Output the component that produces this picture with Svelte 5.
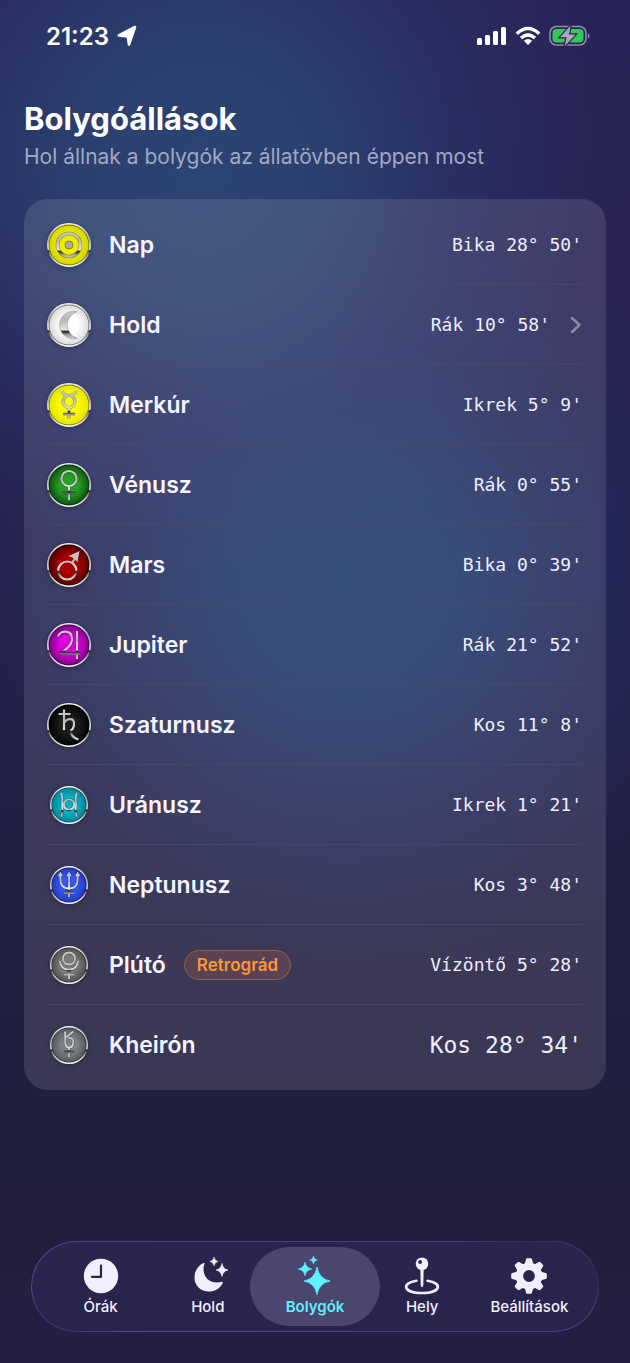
<script>
  const planets = [
    { id: 'sun', name: 'Nap', sign: "Bika 28° 50'", inner: '#f0ec00', outer: '#d2d200' },
    { id: 'moon', name: 'Hold', sign: "Rák 10° 58'", inner: '#ffffff', outer: '#d6d6d6', link: true },
    { id: 'mercury', name: 'Merkúr', sign: "Ikrek 5° 9'", inner: '#fcfc00', outer: '#e2e200' },
    { id: 'venus', name: 'Vénusz', sign: "Rák 0° 55'", inner: '#25a023', outer: '#0c4d10' },
    { id: 'mars', name: 'Mars', sign: "Bika 0° 39'", inner: '#a80000', outer: '#4c0000' },
    { id: 'jupiter', name: 'Jupiter', sign: "Rák 21° 52'", inner: '#dc00dc', outer: '#780080' },
    { id: 'saturn', name: 'Szaturnusz', sign: "Kos 11° 8'", inner: '#1c1c1c', outer: '#000000' },
    { id: 'uranus', name: 'Uránusz', sign: "Ikrek 1° 21'", inner: '#08b0c2', outer: '#067f92', small: true },
    { id: 'neptune', name: 'Neptunusz', sign: "Kos 3° 48'", inner: '#3558f4', outer: '#2038b4', small: true },
    { id: 'pluto', name: 'Plútó', sign: "Vízöntő 5° 28'", inner: '#7c7c7c', outer: '#4c4c4c', small: true, retro: true },
    { id: 'chiron', name: 'Kheirón', sign: "Kos 28° 34'", inner: '#7c8284', outer: '#505456', small: true, large: true }
  ];

  const glyphs = {
    mercury: 'M15 8 Q16 12.500 22 12.500 Q28 12.500 29 8 M28 18.500 A6 6 0 1 1 16 18.500 A6 6 0 1 1 28 18.500 M22 24.500 V36 M16 31 H28',
    venus: 'M29.500 15.500 A7.500 7.500 0 1 1 14.500 15.500 A7.500 7.500 0 1 1 29.500 15.500 M22 23 V37 M15 30 H29',
    jupiter: 'M11 13.500 C13 7 25 6 25 16 C25 22 18 28 13 30.500 H33 M30 8 V36',
    saturn: 'M17 6.500 V27 M11.500 11 H23.500 M17 20 C20 14.500 27 15 27 20 C27 23 26.500 26 24 27.500 C23.500 32 27 35 31.500 36.500',
    uranus: 'M13 8 Q15 14 14 21.500 Q15 30 13 35.500 M31 8 Q29 14 30 21.500 Q29 30 31 35.500 M28 21.500 A6 6 0 1 1 16 21.500 A6 6 0 1 1 28 21.500 M14 21.500 H16 M28 21.500 H30',
    neptune: 'M12 8 V15 Q12 26 22 26 Q32 26 32 15 V8 M22 8 V36 M16 31 H28 M10 11.500 L12 8.500 L14 11.500 M20 11.500 L22 8.500 L24 11.500 M30 11.500 L32 8.500 L34 11.500',
    pluto: 'M29 14.500 A7 7 0 1 1 15 14.500 A7 7 0 1 1 29 14.500 M11 17 Q13 27.500 22 27.500 Q31 27.500 33 17 M22 27.500 V38 M16 33 H28',
    chiron: 'M17.500 6.500 V17 M27 6.500 L17.500 14 M17.500 17 Q17.500 25 22 25 Q27 25 27 17 Q26 13.500 21 14 M22 25 V36 M16 30 H28'
  };

  const tabs = [
    { id: 'clock', label: 'Órák' },
    { id: 'night', label: 'Hold' },
    { id: 'stars', label: 'Bolygók' },
    { id: 'place', label: 'Hely' },
    { id: 'gear', label: 'Beállítások' }
  ];
  let active = $state('stars');
  const teeth = [0, 45, 90, 135, 180, 225, 270, 315];
</script>

<div class="screen">
  <div class="status">
    <div class="time">
      <span>21:23</span>
      <svg width="20" height="22" viewBox="0 0 20 22" aria-hidden="true">
        <path d="M18 2 L12 19.500 L10.800 11.500 L1.800 10.500 Z" fill="#fff" stroke="#fff" stroke-width="2.600" stroke-linejoin="round" />
      </svg>
    </div>
    <div class="signals">
      <svg width="30" height="20" viewBox="0 0 30 20" aria-hidden="true">
        <g fill="#fff">
          <rect x="0" y="12" width="5" height="7" rx="1.500" />
          <rect x="8" y="9" width="5" height="10" rx="1.500" />
          <rect x="16" y="5" width="5" height="14" rx="1.500" />
          <rect x="24" y="1" width="5" height="18" rx="1.500" />
        </g>
      </svg>
      <svg width="26" height="20" viewBox="0 0 26 20" aria-hidden="true">
        <g fill="none" stroke="#fff" stroke-width="3.400">
          <path d="M1.800 7.700 Q13 -2.700 24.200 7.700" />
          <path d="M6 12 Q13 5.700 20 12" />
        </g>
        <path d="M8.800 14.700 Q13 11.400 17.200 14.700 L13 19 Z" fill="#fff" />
      </svg>
      <svg width="42" height="22" viewBox="0 0 42 22" aria-hidden="true">
        <rect x="1" y="1.500" width="36" height="18.500" rx="6.500" fill="none" stroke="#8d89a8" stroke-width="1.600" />
        <rect x="3.500" y="4" width="31" height="13.500" rx="4" fill="#35c95a" />
        <path d="M39 8 Q42 11 39 14 Z" fill="#8d89a8" />
        <path d="M21.500 .8 L11 12.200 H17.500 L15.800 21.200 L26.500 9.500 H20 Z" fill="#aaa6bd" stroke="#292552" stroke-width="2.400" paint-order="stroke" />
      </svg>
    </div>
  </div>

  <header>
    <h1>Bolygóállások</h1>
    <p>Hol állnak a bolygók az állatövben éppen most</p>
  </header>

  <ul class="card">
    {#each planets as p (p.id)}
      <li class="row">
        <span class="medal" class:small={p.small}>
          <svg viewBox="0 0 44 44" aria-hidden="true">
            <defs>
              <radialGradient id="fill-{p.id}">
                <stop offset="0" stop-color={p.inner} />
                <stop offset=".45" stop-color={p.inner} />
                <stop offset="1" stop-color={p.outer} />
              </radialGradient>
              <linearGradient id="rim-{p.id}" gradientUnits="userSpaceOnUse" x1="0" y1="0" x2="0" y2="44">
                <stop offset="0" stop-color="#f4f4f4" />
                <stop offset=".35" stop-color="#a8a8a8" />
                <stop offset=".6" stop-color="#ededed" />
                <stop offset=".63" stop-color="#202020" />
                <stop offset=".7" stop-color="#888" />
                <stop offset=".82" stop-color="#ccc" />
                <stop offset="1" stop-color="#fff" />
              </linearGradient>
              <linearGradient id="metal-{p.id}" gradientUnits="userSpaceOnUse" x1="0" y1="6" x2="0" y2="38">
                <stop offset="0" stop-color="#cfcfcf" />
                <stop offset=".35" stop-color="#b8b8b8" />
                <stop offset=".66" stop-color="#e6e6e6" />
                <stop offset=".69" stop-color="#262626" />
                <stop offset=".75" stop-color="#505050" />
                <stop offset=".81" stop-color="#aaa" />
                <stop offset="1" stop-color="#ddd" />
              </linearGradient>
            </defs>
            <circle cx="22" cy="22" r="21" fill="url(#fill-{p.id})" />
            <circle cx="22" cy="22" r="20" fill="none" stroke="#000" stroke-opacity=".45" stroke-width="1" />
            <circle cx="22" cy="22" r="21.200" fill="none" stroke="url(#rim-{p.id})" stroke-width="1.600" />
            {#if p.id === 'sun'}
              <circle cx="22" cy="22" r="11.500" fill="none" stroke="#8a8a10" stroke-width="3.600" />
              <circle cx="22" cy="22" r="11.500" fill="none" stroke="url(#metal-{p.id})" stroke-width="2.600" />
              <circle cx="22" cy="22" r="4" fill="#aaa" stroke="#85851c" />
            {:else if p.id === 'moon'}
              <path d="M30 8.700 A13.800 13.800 0 1 0 30 35.300 A14 14 0 0 1 30 8.700 Z" fill="url(#metal-{p.id})" stroke="#8f8f8f" stroke-width=".5" />
            {:else if p.id === 'mars'}
              <g fill="none" stroke="url(#metal-{p.id})" stroke-width="2.200">
                <circle cx="20.300" cy="27.500" r="9" />
                <path d="M25 20 L29 14" />
              </g>
              <path d="M32.500 8 L21.500 13 L25.500 14.500 L30.500 19 Z" fill="#c8c2c2" />
            {:else}
              <path d={glyphs[p.id]} fill="none" stroke="#000" stroke-opacity=".35" stroke-width="3.200" />
              <path d={glyphs[p.id]} fill="none" stroke="url(#metal-{p.id})" stroke-width="2.200" />
            {/if}
          </svg>
        </span>
        <span class="name">{p.name}</span>
        {#if p.retro}<span class="badge">Retrográd</span>{/if}
        <span class="sign" class:large={p.large}>{p.sign}</span>
        {#if p.link}
          <button class="more" aria-label={p.name}>
            <svg width="12" height="18" viewBox="0 0 12 18" aria-hidden="true">
              <path d="M2 2 L9.500 9 L2 16" fill="none" stroke="#8e8ba8" stroke-width="2.400" stroke-linecap="round" stroke-linejoin="round" />
            </svg>
          </button>
        {/if}
      </li>
    {/each}
  </ul>

  <nav>
    {#each tabs as t (t.id)}
      <button class="tab" class:active={active === t.id} onclick={() => (active = t.id)}>
        <svg width="40" height="40" viewBox="0 0 40 40" fill="currentColor" aria-hidden="true">
          {#if t.id === 'clock'}
            <circle cx="20" cy="20" r="17.200" />
            <path d="M20 9.500 V20.800 H11" fill="none" stroke="#29254d" stroke-width="2.200" stroke-linecap="round" stroke-linejoin="round" />
          {:else if t.id === 'night'}
            <path d="M16.500 7.500 C12.500 19 21 29.500 34 25.800 Q35.300 25.800 34.500 27.500 C31.500 33 26.500 35.500 21 35.500 C12.500 35.500 6.500 29.500 6.500 21.500 C6.500 15 10 9.500 15.500 7 Q16.800 6.600 16.500 7.500 Z" />
            <path d="M26 1 Q26.600 4.900 30 5.500 Q26.600 6.100 26 10 Q25.400 6.100 22 5.500 Q25.400 4.900 26 1 Z" stroke="currentColor" stroke-width=".5" />
            <path d="M34 7.500 Q35 13 40 14 Q35 15 34 20.500 Q33 15 28 14 Q33 13 34 7.500 Z" stroke="currentColor" stroke-width=".6" />
          {:else if t.id === 'stars'}
            <path d="M22 11 Q24 23 35 25 Q24 27 22 38.500 Q20 27 9 25 Q20 23 22 11 Z" stroke="currentColor" stroke-width=".8" stroke-linejoin="round" />
            <path d="M10 6 Q11 12 17 13 Q11 14 10 20 Q9 14 3 13 Q9 12 10 6 Z" stroke="currentColor" stroke-width=".5" />
            <path d="M18.500 0 Q19.100 3.500 22.500 4 Q19.100 4.500 18.500 8 Q17.900 4.500 14.500 4 Q17.900 3.500 18.500 0 Z" stroke="currentColor" stroke-width=".4" />
          {:else if t.id === 'place'}
            <path d="M14.500 24.800 C-1 27 1 37 20 37 C39 37 41 27 25.500 24.800" fill="none" stroke="currentColor" stroke-width="2.600" stroke-linecap="round" />
            <path d="M18.300 12 H21.700 L21.300 29 Q20 33.500 18.700 29 Z" />
            <circle cx="20" cy="7.700" r="6.300" />
            <circle cx="18.100" cy="6" r="1.900" fill="#29254d" />
          {:else}
            {#each teeth as a (a)}
              <path transform="rotate({a} 20 20)" d="M15.500 9 L17 3.200 Q17.300 2.200 18.300 2.200 H21.700 Q22.700 2.200 23 3.200 L24.500 9 Z" />
            {/each}
            <circle cx="20" cy="20" r="9.600" fill="none" stroke="currentColor" stroke-width="7.400" />
          {/if}
        </svg>
        <span>{t.label}</span>
      </button>
    {/each}
  </nav>
</div>

<style>
  :global(body) {
    margin: 0;
    background: #211f3d;
  }
  .screen {
    box-sizing: border-box;
    min-height: 100vh;
    display: flex;
    flex-direction: column;
    padding: 16px 24px 31px;
    font-family: Inter, "Liberation Sans", sans-serif;
    color: #fff;
    background:
      radial-gradient(circle at 32% 170px, rgba(43, 70, 116, 0.95) 0, rgba(43, 68, 115, 0.85) 130px, rgba(42, 56, 110, 0.45) 270px, rgba(40, 38, 90, 0) 400px),
      radial-gradient(circle at 55% 580px, rgba(28, 58, 108, 0.95) 0, rgba(29, 56, 107, 0.9) 120px, rgba(31, 46, 98, 0.5) 250px, rgba(36, 34, 80, 0) 380px),
      linear-gradient(#292457 0, #26214f 500px, #211f40 1020px, #211f3c 1250px, #251f45 100%);
  }
  .status {
    display: flex;
    justify-content: space-between;
    align-items: center;
    height: 40px;
    padding: 0 15px 0 22px;
  }
  .time,
  .signals {
    display: flex;
    align-items: center;
    gap: 8px;
  }
  .time {
    font-size: 24px;
    font-weight: 600;
  }
  header {
    padding-top: 43px;
  }
  h1 {
    margin: 0;
    font-size: 31px;
    line-height: 40px;
    font-weight: 700;
  }
  p {
    margin: 4px 0 0;
    font-size: 21px;
    line-height: 28px;
    color: #a0a8c5;
  }
  .card {
    list-style: none;
    margin: 28px 0 32px;
    padding: 6px 24px 5px;
    border-radius: 24px;
    background: rgba(245, 240, 248, 0.12);
  }
  .row {
    display: flex;
    align-items: center;
    height: 79px;
    border-bottom: 1px solid rgba(80, 80, 94, 0.6);
  }
  .row:last-child {
    border-bottom-color: transparent;
  }
  .medal {
    display: grid;
    place-items: center;
    width: 44px;
    height: 44px;
    margin: 0 18px 0 -1px;
  }
  .medal svg {
    width: 44px;
    height: 44px;
    overflow: visible;
    border-radius: 50%;
    box-shadow: 0 1px 5px rgba(0, 0, 0, 0.3);
  }
  .medal.small svg {
    width: 38px;
    height: 38px;
  }
  .name {
    font-size: 23px;
    font-weight: 600;
    color: #f5f4ff;
  }
  .badge {
    margin-left: 18px;
    padding: 0 12px;
    border: 1px solid #95603f;
    border-radius: 15px;
    background: #584253;
    color: #fb9736;
    font-size: 17px;
    line-height: 28px;
    font-weight: 600;
  }
  .sign {
    margin-left: auto;
    font-family: "DejaVu Sans Mono", "Liberation Mono", monospace;
    font-size: 18px;
    color: #f0eefc;
  }
  .sign.large {
    font-size: 23px;
  }
  .more {
    display: flex;
    margin: 0 0 0 20px;
    padding: 0;
    border: 0;
    background: none;
  }
  nav {
    display: grid;
    grid-template-columns: repeat(5, 1fr);
    margin: auto 7px 0;
    padding: 5px 15px;
    border: 1px solid transparent;
    border-radius: 46px;
    background:
      linear-gradient(#29254d, #28244a) padding-box,
      linear-gradient(25deg, #332c66 1%, #51449f 12%, #463b8c 80%, #2e2955 91%, #51449f 100%) border-box;
  }
  .tab {
    display: flex;
    flex-direction: column;
    align-items: center;
    gap: 2px;
    height: 79px;
    margin: 0 -11px;
    padding: 9px 0 0;
    border: 0;
    border-radius: 40px;
    background: none;
    color: #f1efff;
    font-family: inherit;
    font-size: 15px;
    line-height: 18px;
    font-weight: 500;
  }
  .tab.active {
    background: #4a466e;
    color: #5ff0ff;
    font-weight: 600;
  }
</style>
